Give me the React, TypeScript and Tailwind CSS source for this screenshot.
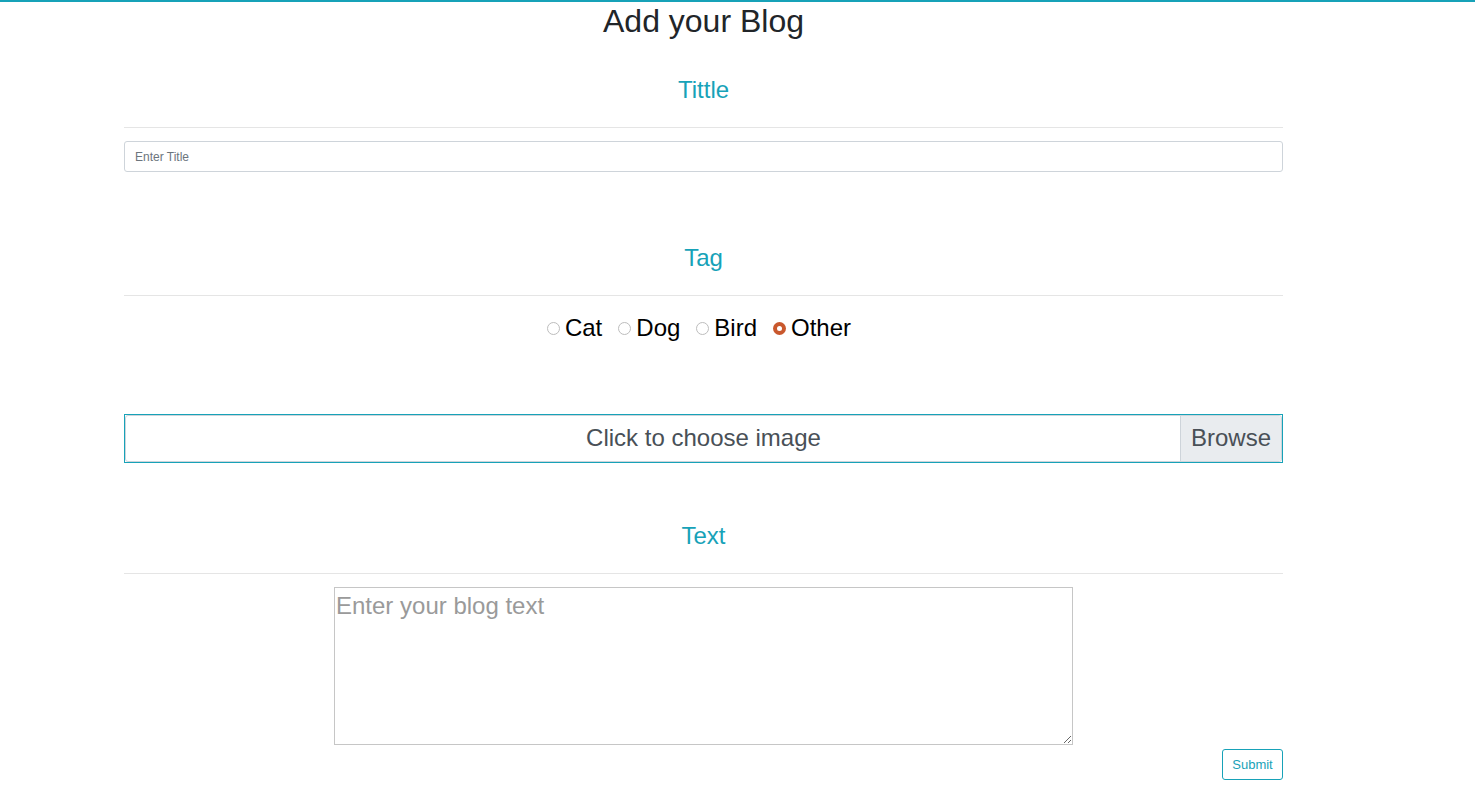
import React from "react";

const font = { fontFamily: '"Liberation Sans", Arial, sans-serif' };

function SectionTitle({ children, mt }: { children: React.ReactNode; mt: string }) {
  return (
    <>
      <h4 className={`${mt} text-center text-[24px] leading-[29px] text-[#17a2b8] font-normal`}>{children}</h4>
      <hr className="mt-[23px] border-0 border-t border-[#e5e5e5]" />
    </>
  );
}

function Radio({ label, checked }: { label: string; checked?: boolean }) {
  return (
    <label className="flex items-center">
      {checked ? (
        <span className="flex h-[13px] w-[13px] items-center justify-center rounded-full bg-[#c9582d]">
          <span className="h-[5px] w-[5px] rounded-full bg-white" />
        </span>
      ) : (
        <span className="h-[13px] w-[13px] rounded-full border border-[#bdbdbd] bg-white" />
      )}
      <span className="ml-[5px] text-black">{label}</span>
    </label>
  );
}

export default function App() {
  return (
    <div className="min-h-[806px] border-t-2 border-[#17a2b8] bg-white" style={font}>
      <div className="ml-[124px] w-[1159px]">
        <h2 className="text-center text-[32px] leading-[38px] text-[#212529] font-normal">Add your Blog</h2>

        <SectionTitle mt="mt-[35px]">Tittle</SectionTitle>
        <input
          type="text"
          placeholder="Enter Title"
          className="mt-[13px] block h-[31px] w-full rounded-[3px] border border-[#ced4da] pl-[10px] text-[12px] text-[#495057] outline-none placeholder:text-[#6c757d]"
          style={font}
        />

        <SectionTitle mt="mt-[71px]">Tag</SectionTitle>
        <div className="mt-[14px] flex h-[36px] items-center justify-center gap-[16px] pr-[9px] text-[24px] leading-[36px]">
          <Radio label="Cat" />
          <Radio label="Dog" />
          <Radio label="Bird" />
          <Radio label="Other" checked />
        </div>

        <div className="mt-[68px] border border-[#17a2b8]">
          <div className="relative flex h-[47px] items-center justify-center rounded-[3px] border border-[#ced4da] pb-[2px] text-[24px] text-[#495057]">
            <span>Click to choose image</span>
            <span className="absolute bottom-0 right-0 top-0 flex w-[101px] items-center justify-center rounded-r-[3px] border-l border-[#ced4da] bg-[#e9ecef] pb-[2px]">
              Browse
            </span>
          </div>
        </div>

        <SectionTitle mt="mt-[58px]">Text</SectionTitle>
        <textarea
          placeholder="Enter your blog text"
          className="mx-auto mt-[13px] block h-[158px] w-[739px] border border-[#c6c6c6] pb-[2px] pl-[1px] pr-[2px] pt-[4px] text-[24px] leading-[28px] text-black outline-none placeholder:text-[#9a9a9a]"
          style={font}
        />
        <div className="mt-[4px] flex justify-end">
          <button className="h-[31px] w-[61px] rounded-[3px] border border-[#17a2b8] bg-white text-[13px] text-[#17a2b8]" style={font}>
            Submit
          </button>
        </div>
      </div>
    </div>
  );
}
